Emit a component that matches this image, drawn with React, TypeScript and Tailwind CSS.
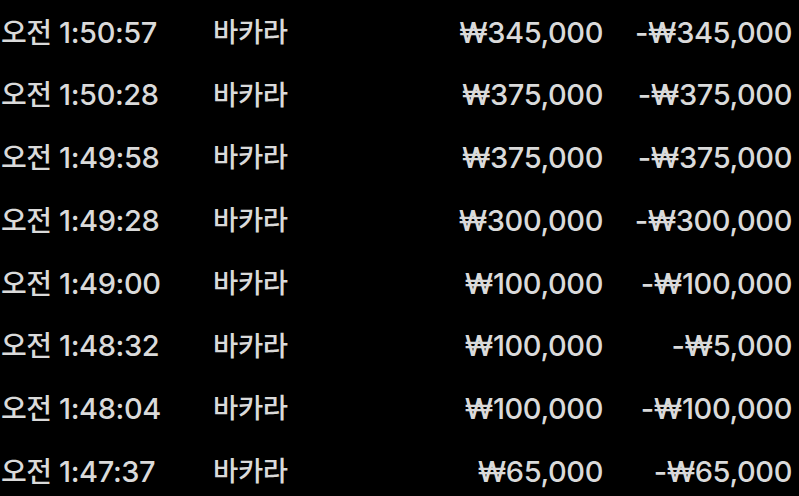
import React from 'react';

interface BetRow {
  time: string;
  game: string;
  bet: string;
  result: string;
}

const rows: BetRow[] = [
  { time: '1:50:57', game: '바카라', bet: '₩345,000', result: '-₩345,000' },
  { time: '1:50:28', game: '바카라', bet: '₩375,000', result: '-₩375,000' },
  { time: '1:49:58', game: '바카라', bet: '₩375,000', result: '-₩375,000' },
  { time: '1:49:28', game: '바카라', bet: '₩300,000', result: '-₩300,000' },
  { time: '1:49:00', game: '바카라', bet: '₩100,000', result: '-₩100,000' },
  { time: '1:48:32', game: '바카라', bet: '₩100,000', result: '-₩5,000' },
  { time: '1:48:04', game: '바카라', bet: '₩100,000', result: '-₩100,000' },
  { time: '1:47:37', game: '바카라', bet: '₩65,000', result: '-₩65,000' },
];

const App: React.FC = () => {
  return (
    <div
      className="w-[799px] h-[496px] bg-black text-[#dadada] overflow-hidden pt-[1px]"
      style={{ fontFamily: "Inter, 'Noto Sans CJK KR', sans-serif" }}
    >
      {rows.map((row, i) => (
        <div key={i} className="flex items-center h-[62.75px] text-[29px] font-medium tracking-[-0.4px]">
          <div className="w-[213px] pl-[1px] whitespace-nowrap">
            <span className="text-[28px]">오전</span> {row.time}
          </div>
          <div className="w-[200px] whitespace-nowrap text-[27.5px]">{row.game}</div>
          <div className="w-[190px] text-right whitespace-nowrap">{row.bet}</div>
          <div className="w-[189px] text-right whitespace-nowrap">{row.result}</div>
        </div>
      ))}
    </div>
  );
};

export default App;
